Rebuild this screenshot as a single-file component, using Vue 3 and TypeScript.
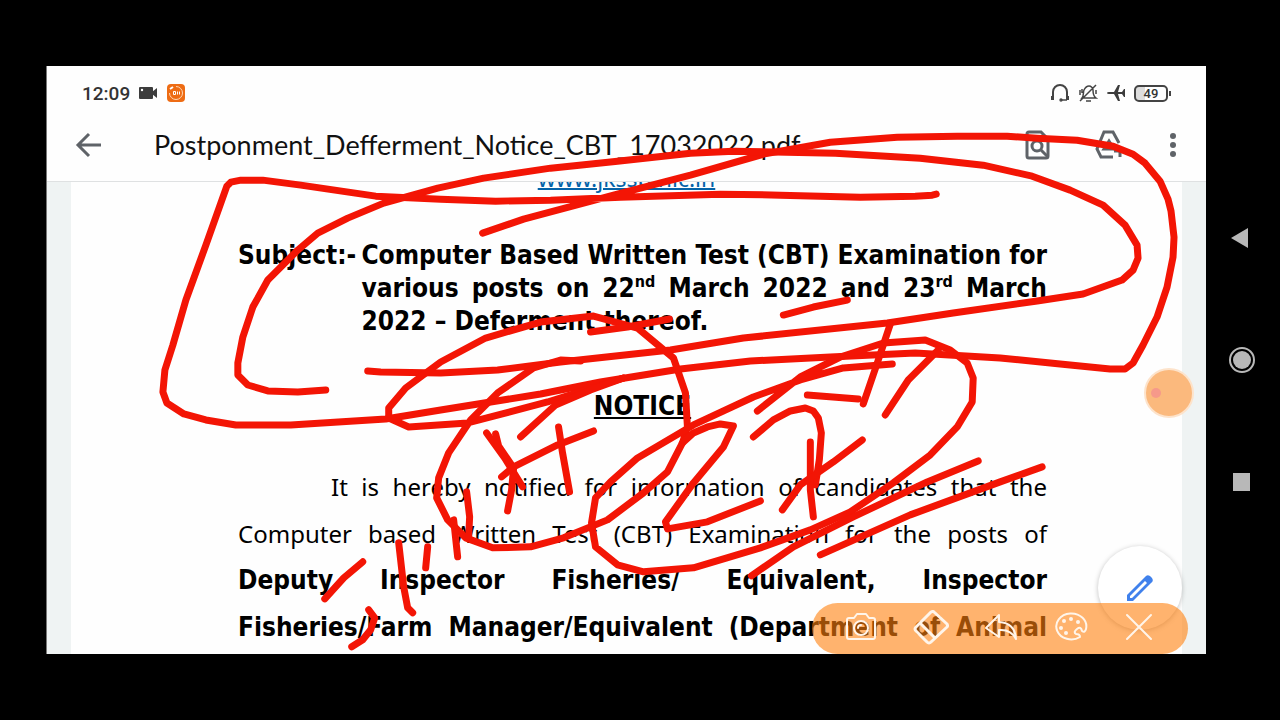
<script setup lang="ts">
import { ref } from 'vue'

type Point = [number, number]

const fileName = ref('Postponment_Defferment_Notice_CBT_17032022.pdf')

const strokes: Point[][] = [
  [[936,194],[932,195],[915,196],[860,197],[780,195],[720,194],[620,197],[550,200],[495,201],[440,199],[375,196],[300,185],[262,180],[240,180],[230,182],[226,186],[205,245],[185,300],[172,345],[164,370],[162,392],[166,403],[183,414],[205,420],[235,425],[290,425],[385,419],[440,410],[540,394],[600,382],[680,369],[750,361],[830,357],[915,353],[1000,358],[1060,364],[1110,369],[1125,369],[1133,363],[1143,345],[1157,317],[1167,287],[1173,257],[1174,237],[1171,211],[1168,199],[1160,181],[1145,163],[1133,154],[1113,146],[1077,140],[1037,138],[1007,136],[957,136],[897,137],[830,142],[763,154],[690,175],[613,195],[523,219],[482,233]],
  [[325,390],[297,392],[267,391],[247,385],[237,375],[237,363],[242,337],[252,307],[267,280],[297,250],[317,233],[347,218],[383,203],[437,188],[483,178],[550,168],[617,161],[690,153],[733,151],[835,153],[920,158],[983,165],[1032,176],[1070,190],[1103,205],[1125,225],[1137,245],[1138,258],[1133,270],[1122,280],[1083,294],[1037,301],[953,313],[887,323],[743,338],[670,350],[560,362],[497,370],[440,373],[380,372],[367,371]],
  [[623,378],[547,402],[467,423],[408,427],[388,418],[388,408],[405,388],[440,362],[485,338],[540,322],[593,316],[637,328],[673,358],[685,393],[687,427],[682,443],[667,472],[643,493],[607,520],[563,538],[530,547],[492,548],[465,538],[447,520],[436,498],[438,478],[448,453],[470,420],[497,393],[533,368],[560,360],[580,361]],
  [[520,437],[555,405],[590,390],[623,378]],
  [[590,332],[627,327],[669,319]],
  [[486,433],[504,458],[522,487]],
  [[495,434],[498,446],[513,468],[511,490],[507,511]],
  [[593,431],[557,445],[513,467],[501,477]],
  [[558,427],[562,453],[569,492]],
  [[466,492],[469,517],[468,537]],
  [[453,520],[457,557]],
  [[427,547],[425,568]],
  [[398,543],[403,587],[407,608],[412,613]],
  [[362,562],[343,578],[324,599]],
  [[368,610],[374,618],[370,630],[362,640],[351,647]],
  [[892,364],[843,368],[800,380],[753,397],[693,425],[637,458],[610,482],[595,498],[591,523],[595,547],[617,565],[643,572],[693,568],[760,548],[810,530],[850,512],[893,483],[930,455],[957,427],[972,402],[973,378],[967,363],[950,350],[925,340],[883,343],[840,357],[800,377],[757,411]],
  [[682,443],[693,433],[707,427],[720,424],[733,426],[723,447],[693,483],[665,522],[667,529],[707,522],[760,501]],
  [[753,437],[773,420],[790,411],[805,408],[813,411],[818,418],[821,433],[819,460],[815,485]],
  [[810,442],[810,490],[813,517]],
  [[862,440],[833,462],[800,485],[782,510]],
  [[890,324],[877,363],[863,404]],
  [[807,395],[858,399]],
  [[938,350],[908,380],[885,415]],
  [[783,315],[813,307],[847,300]],
  [[978,461],[927,482],[853,517],[793,547],[751,576]],
  [[820,555],[910,515],[1000,482],[1042,467]],
]

function toPath(points: Point[]): string {
  return 'M' + points.map(([x, y]) => `${x} ${y}`).join('L')
}
</script>

<template>
  <div class="phone">
    <main class="screen">
      <div class="status">
        <span class="clock">12:09</span>
        <svg class="cam" viewBox="0 0 20 14" width="20" height="14"><rect x="1" y="1" width="14" height="12" rx="1" /><path d="M14 6l5-4v10l-5-4z" /><circle cx="4" cy="4" r="1.2" fill="#fff" /></svg>
        <svg class="rec" viewBox="0 0 20 20" width="20" height="20"><rect x="1" y="1" width="18" height="18" rx="4" fill="#ee6c14" /><path d="M10 3.500A6.500 6.500 0 1 1 3.500 10" fill="none" stroke="#ffd9b8" /><path d="M4 6l3-2" stroke="#fff" stroke-width="2" /><path d="M7.500 8.500h2v3h-2zM11.500 8.500v3M13.500 8.500v3" fill="none" stroke="#fff" /></svg>
        <span class="spacer"></span>
        <svg viewBox="0 0 20 20" width="20" height="20" class="line"><path d="M3 15V9a7 7 0 0 1 14 0v6" /><path d="M2.500 13v4M17.500 13v4" stroke-width="3" /><path d="M17 17h-6" stroke-width="1.500" /><circle cx="11" cy="17" r=".7" /></svg>
        <svg viewBox="0 0 20 20" width="20" height="20" class="line bell"><path d="M4 15c2-2 1-6 2-8s3-4 5-4 4 2 4 4-0 6 3 8zM8 18h5M18 2L2 18M2 7v5M4 6v4M18 7v4" /></svg>
        <svg viewBox="0 0 20 20" width="20" height="20" class="plane"><path d="M1 10q0-1 2-1h5l4-7h2l-2 7h4l2-3h1v8h-1l-2-3h-4l2 7h-2l-4-7H3q-2 0-2-1z" /></svg>
        <span class="battery"><span class="level">49</span></span>
      </div>

      <header class="bar">
        <button class="icon-btn back" aria-label="Back">
          <svg viewBox="0 0 28 28" width="28" height="28"><path d="M26 14H4M14 3L3 14l11 11" /></svg>
        </button>
        <h1>{{ fileName }}</h1>
        <button class="icon-btn" aria-label="Find in file">
          <svg viewBox="0 0 28 32" width="28" height="32"><path d="M6 3h12l7 7v17q0 2-2 2H6q-2 0-2-2V5q0-2 2-2z" /><circle cx="14" cy="17" r="5" /><path d="M18 21l7 7" /></svg>
        </button>
        <button class="icon-btn drive" aria-label="Add to Drive">
          <svg viewBox="0 0 30 32" width="30" height="32"><path d="M20 28H8l-4-8L11 3h9l6 11M11 20l5-8 5 8zM27 17v11M21 22h10" /></svg>
        </button>
        <button class="icon-btn more" aria-label="More options">
          <svg viewBox="0 0 8 28" width="8" height="28"><circle cx="4" cy="5" r="3" /><circle cx="4" cy="14" r="3" /><circle cx="4" cy="23" r="3" /></svg>
        </button>
      </header>

      <section class="viewer">
        <article class="sheet">
          <p class="site"><a href="#">www.jkssb.nic.in</a></p>
          <div class="subject">
            <span class="label">Subject:-</span>
            <div class="subject-text">
              <span class="full">Computer Based Written Test (CBT) Examination for</span>
              <span class="full">various posts on 22<sup>nd</sup> March 2022 and 23<sup>rd</sup> March</span>
              <span class="last">2022 – Deferment thereof.</span>
            </div>
          </div>
          <h2>NOTICE</h2>
          <p class="body">
            <span class="full indent">It is hereby notified for information of candidates that the</span>
            <span class="full">Computer based Written Test (CBT) Examination for the posts of</span>
            <b class="full">Deputy Inspector Fisheries/ Equivalent, Inspector</b>
            <b class="full">Fisheries/Farm Manager/Equivalent (Department of Animal</b>
          </p>
        </article>
      </section>

      <button class="fab" aria-label="Edit">
        <svg viewBox="0 0 30 30" width="30" height="30"><path d="M2 28v-6L20 4q2-3 5-1l2 2q2 3-1 5L8 28zM5 25h2L22 10l-2-2L5 23z" fill-rule="evenodd" /></svg>
      </button>

      <svg class="ink" viewBox="46 66 1160 588" aria-hidden="true">
        <path v-for="(s, i) in strokes" :key="i" :d="toPath(s)" />
      </svg>

      <button class="bubble" aria-label="Recorder"><i></i></button>

      <div class="tools">
        <button aria-label="Screenshot"><svg viewBox="0 0 34 34" width="34" height="34"><path d="M5 7h5l3-4h9l3 4h4q2 0 2 2v17q0 2-2 2H5q-2 0-2-2V9q0-2 2-2z" /><circle cx="17" cy="17" r="7" /><path d="M14 17a3 3 0 0 1 3-3" /></svg></button>
        <button aria-label="Eraser"><svg viewBox="0 0 36 36" width="36" height="36"><path d="M21 2L34 14Q35 16 34 17L18 32q-2 2-4 0L3 21q-2-2 0-4L18 2q2-1 3 0zM8 14l13 13" stroke-width="3" /></svg></button>
        <button aria-label="Undo"><svg viewBox="0 0 36 34" width="36" height="34"><path d="M16 4L3 17l13 9v-7q12-1 17 9-1-16-17-17z" /></svg></button>
        <button aria-label="Colors"><svg viewBox="0 0 34 34" width="34" height="34"><path d="M26 26A15 13 0 1 1 32 18q-1 4-4 2-1-5-5-2t-1 5q4 0 4 3z" /><g class="dots"><circle cx="7" cy="17" r="2" /><circle cx="10" cy="10" r="2" /><circle cx="17" cy="8" r="2" /><circle cx="24" cy="11" r="2" /><circle cx="12" cy="22" r="2" /></g></svg></button>
        <button aria-label="Close"><svg viewBox="0 0 34 34" width="34" height="34"><path d="M5 4l24 24M29 4L5 28" /></svg></button>
      </div>
    </main>

    <nav class="nav">
      <button aria-label="Back"><svg viewBox="0 0 28 28" width="28" height="28"><path d="M3 14L20 4v20z" /></svg></button>
      <button aria-label="Home"><svg viewBox="0 0 28 28" width="28" height="28"><circle cx="14" cy="14" r="9" /><circle cx="14" cy="14" r="12" class="ring" /></svg></button>
      <button aria-label="Recents"><svg viewBox="0 0 28 28" width="28" height="28"><rect x="5" y="5" width="17" height="18" /></svg></button>
    </nav>
  </div>
</template>

<style>
body {
  margin: 0;
  background: #000;
}
</style>

<style scoped>
* {
  box-sizing: border-box;
}
button {
  border: 0;
  padding: 0;
  background: none;
  display: flex;
  align-items: center;
  justify-content: center;
}
.phone {
  display: flex;
  min-height: 100vh;
  padding: 66px 0 66px 46px;
  background: #000;
}
.screen {
  flex: 1;
  position: relative;
  display: flex;
  flex-direction: column;
  overflow: hidden;
  background: #fefefe;
  border-left: 1px solid #777;
}
.status {
  display: flex;
  align-items: center;
  gap: 8px;
  height: 54px;
  padding: 0 35px;
  color: #333;
  font: 500 19px Roboto, sans-serif;
}
.spacer {
  flex: 1;
}
.cam, .plane {
  fill: #3c3c3c;
}
.line {
  fill: none;
  stroke: #444;
  stroke-width: 2;
}
.bell {
  stroke-width: 1.5;
}
.battery {
  position: relative;
  margin-right: 3px;
}
.level {
  display: block;
  width: 34px;
  height: 17px;
  border: 2px solid #444;
  border-radius: 5px;
  background: linear-gradient(90deg, #ddd 30%, #fff 30%);
  font: 500 13px/13px Roboto, sans-serif;
  text-align: center;
}
.battery::after {
  content: "";
  position: absolute;
  right: -3px;
  top: 6px;
  width: 2px;
  height: 5px;
  background: #444;
}
.bar {
  display: flex;
  align-items: center;
  height: 62px;
  padding: 0 29px 11px 28px;
  border-bottom: 1px solid #dfe1e2;
}
h1 {
  flex: 1;
  margin: 0 0 2px;
  color: #111;
  font: 400 27px Lato, sans-serif;
  white-space: nowrap;
}
.icon-btn svg {
  fill: none;
  stroke: #5f6368;
  stroke-width: 3;
}
.back {
  margin-right: 51px;
}
.drive {
  margin-left: 42px;
}
.more {
  margin-left: 46px;
}
.more svg {
  fill: #5f6368;
  stroke: none;
}
.viewer {
  flex: 1 1 0;
  overflow: hidden;
  padding: 0 24px;
  background: #eff3f3;
}
.sheet {
  display: flow-root;
  height: 100%;
  padding: 0 135px 0 167px;
  background: #fefefe;
  color: #000;
  font: 24px "Noto Sans", "Open Sans", sans-serif;
}
.site {
  margin: -21px 0 0;
  height: 78px;
  padding-right: 32px;
  font-size: 23px;
  line-height: 34px;
  text-align: center;
}
.site a {
  color: #0563a8;
  text-decoration-thickness: 2px;
}
.subject, h2, b {
  font: 700 26px "DejaVu Sans Condensed", "Noto Sans", sans-serif;
}
.subject {
  display: flex;
  line-height: 33px;
}
.label {
  width: 126px;
}
.subject-text {
  flex: 1;
}
.full {
  display: block;
  white-space: nowrap;
  text-align-last: justify;
}
sup {
  font-size: 16px;
  line-height: 0;
}
h2 {
  margin: 51px 0 0;
  line-height: 34px;
  text-align: center;
  text-decoration: underline;
}
.body {
  margin: 40px 0 0;
  line-height: 47px;
}
b {
  line-height: 47px;
}
.indent {
  padding-left: 93px;
}
.ink {
  position: absolute;
  inset: 0;
  width: 100%;
  height: 100%;
  pointer-events: none;
}
.ink path {
  fill: none;
  stroke: #f31505;
  stroke-width: 7;
  stroke-linecap: round;
  stroke-linejoin: round;
}
.fab {
  position: absolute;
  right: 24px;
  bottom: 24px;
  width: 84px;
  height: 84px;
  border-radius: 50%;
  background: #fff;
  box-shadow: 0 1px 5px rgba(0, 0, 0, .25);
}
.fab svg {
  fill: #4081ec;
}
.bubble {
  position: absolute;
  right: 12px;
  top: 302px;
  width: 50px;
  height: 50px;
  border: 2px solid #fde3cb;
  border-radius: 50%;
  background: #fbb97d;
  justify-content: flex-start;
  padding-left: 5px;
}
.bubble i {
  width: 10px;
  height: 10px;
  border-radius: 50%;
  background: #f6998a;
}
.tools {
  position: absolute;
  right: 18px;
  bottom: 0;
  width: 376px;
  height: 51px;
  padding: 0 32px 2px;
  display: flex;
  align-items: center;
  justify-content: space-between;
  border-radius: 26px;
  background: rgba(255, 128, 14, .6);
}
.tools svg {
  fill: none;
  stroke: #fff5ea;
  stroke-width: 2;
  stroke-linecap: round;
  stroke-linejoin: round;
}
.tools .dots {
  fill: #fff5ea;
  stroke: none;
}
.nav {
  width: 74px;
  display: flex;
  flex-direction: column;
  align-items: center;
  justify-content: center;
  gap: 94px;
  padding-right: 3px;
}
.nav svg {
  fill: #b8b8b8;
}
.nav .ring {
  fill: none;
  stroke: #b8b8b8;
  stroke-width: 2;
}
</style>
